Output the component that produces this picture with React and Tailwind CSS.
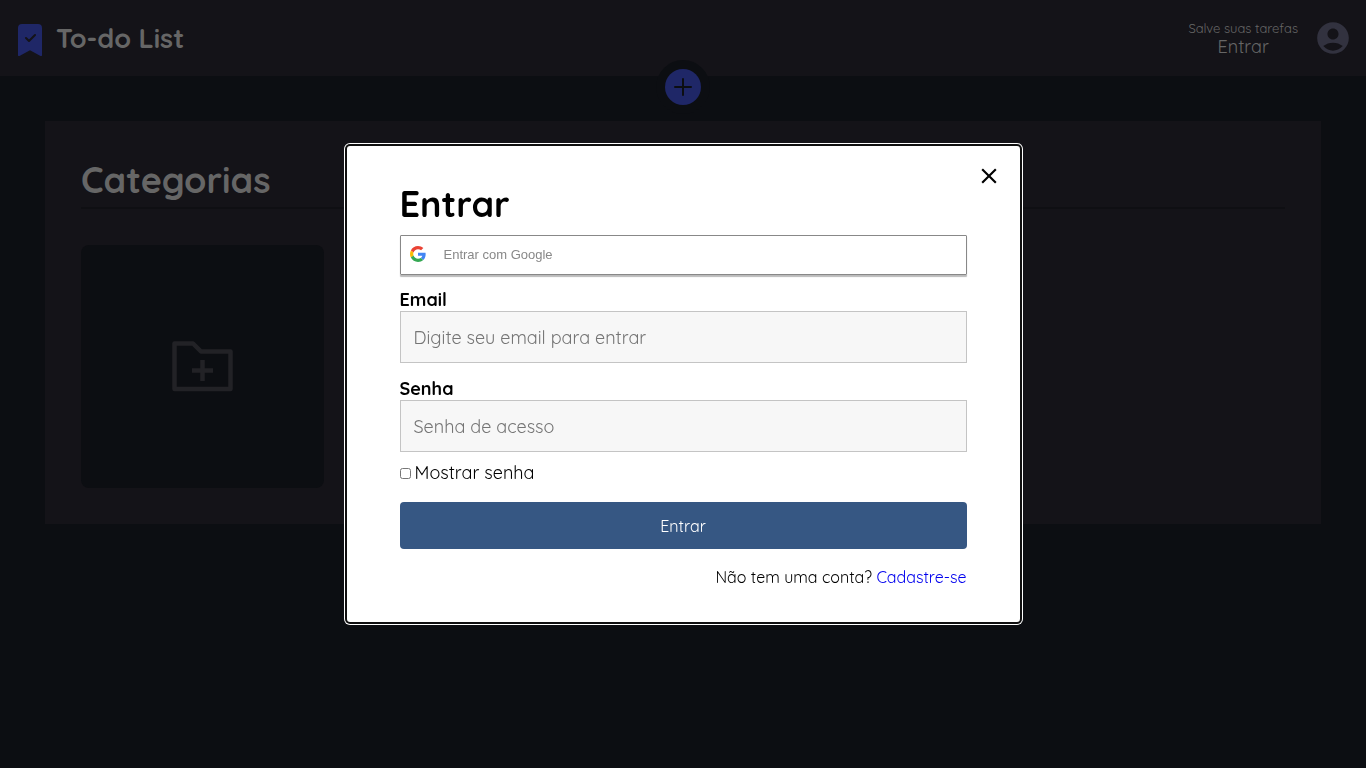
import { useState } from "react";
import { BsFillBookmarkCheckFill } from "react-icons/bs";
import { MdAccountCircle, MdClose } from "react-icons/md";

function GoogleLogo() {
  return (
    <svg viewBox="0 0 48 48" className="size-4" aria-hidden="true">
      <path fill="#EA4335" d="M24 9.5c3.54 0 6.71 1.22 9.21 3.6l6.85-6.85C35.9 2.38 30.47 0 24 0 14.62 0 6.51 5.38 2.56 13.22l7.98 6.19C12.43 13.72 17.74 9.5 24 9.5z" />
      <path fill="#4285F4" d="M46.98 24.55c0-1.57-.15-3.09-.38-4.55H24v9.02h12.94c-.58 2.96-2.26 5.48-4.78 7.18l7.73 6c4.51-4.18 7.09-10.36 7.09-17.65z" />
      <path fill="#FBBC05" d="M10.53 28.59c-.48-1.45-.76-2.99-.76-4.59s.27-3.14.76-4.59l-7.98-6.19C.92 16.46 0 20.12 0 24c0 3.88.92 7.54 2.56 10.78l7.97-6.19z" />
      <path fill="#34A853" d="M24 48c6.48 0 11.93-2.13 15.89-5.81l-7.73-6c-2.15 1.45-4.92 2.3-8.16 2.3-6.26 0-11.57-4.22-13.47-9.91l-7.98 6.19C6.51 42.62 14.62 48 24 48z" />
    </svg>
  );
}

function Header() {
  return (
    <header className="relative flex h-[76px] items-center justify-between bg-[#141318] px-3.5 text-[#666666]">
      <div className="flex items-center gap-2.5">
        <BsFillBookmarkCheckFill className="mt-1 size-8 text-[#1f2767]" />
        <h1 className="text-[27px] leading-9 font-bold">To-do List</h1>
      </div>
      <a href="#entrar" className="flex items-center gap-4">
        <span className="flex flex-col items-center">
          <span className="text-[13px] leading-[18px]">Salve suas tarefas</span>
          <span className="text-lg leading-5">Entrar</span>
        </span>
        <MdAccountCircle className="size-[38px] text-[#32323f]" />
      </a>
      <button
        type="button"
        aria-label="Adicionar tarefa"
        className="absolute top-[60px] left-1/2 flex size-[54px] -translate-x-1/2 items-center justify-center rounded-full bg-[#0c0e12]"
      >
        <span className="flex size-9 items-center justify-center rounded-full bg-[#1f2767]">
          <svg viewBox="0 0 18 18" className="size-[18px] stroke-[#0c0e12]" strokeWidth="2" strokeLinecap="round" aria-hidden="true">
            <path d="M9 1v16M1 9h16" />
          </svg>
        </span>
      </button>
    </header>
  );
}

function Categories() {
  return (
    <main className="mx-[45px] mt-[45px] bg-[#141318] p-9">
      <h2 className="border-b-2 border-[#0f0f13] pb-1 text-4xl leading-[46px] font-bold text-[#666666]">Categorias</h2>
      <button
        type="button"
        aria-label="Nova categoria"
        className="mt-9 flex size-[243px] items-center justify-center rounded-lg bg-[#0c0e12]"
      >
        <svg viewBox="0 0 61 52" className="h-[52px] w-[61px] fill-none stroke-[#222226]" strokeWidth="4.5" strokeLinejoin="round" aria-hidden="true">
          <path d="M2.5 2.5H21l8 8h29.5v37.500h-56z" />
          <path d="M30.5 19v21M20 29.500h21" />
        </svg>
      </button>
    </main>
  );
}

function Field({ id, label, ...props }) {
  return (
    <div className="flex flex-col">
      <label htmlFor={id} className="pt-0.5 text-lg leading-[22px] font-bold">{label}</label>
      <input
        id={id}
        className="h-[52px] w-full border border-[#c4c4c4] bg-[#f7f7f7] px-[13px] text-lg outline-none placeholder:text-[#757575]"
        {...props}
      />
    </div>
  );
}

function LoginDialog() {
  const [visible, setVisible] = useState(false);
  return (
    <div className="fixed inset-0 flex items-center justify-center">
      <section
        role="dialog"
        aria-modal="true"
        aria-labelledby="login-title"
        className="relative w-full max-w-[673px] rounded-[3px] bg-white px-[53px] pt-9 pb-[33px] text-black shadow-[0_0_0_2px_#101010,0_0_0_3px_#ffffff]"
      >
        <button type="button" aria-label="Fechar" className="absolute top-[17px] right-[18px]">
          <MdClose className="size-[26px]" />
        </button>
        <h2 id="login-title" className="text-4xl leading-[43px] font-bold">Entrar</h2>
        <form onSubmit={(e) => e.preventDefault()}>
          <button
            type="button"
            className="mt-2.5 flex h-10 w-full items-center gap-[18px] rounded-[1px] border border-[#888888] px-[9px] pb-0.5 font-['Liberation_Sans',sans-serif] text-[13px] text-[#888888] shadow-[0_2px_1px_#bbbbbb]"
          >
            <GoogleLogo />
            <span className="pt-0.5">Entrar com Google</span>
          </button>
          <div className="mt-3 flex flex-col gap-[13px]">
            <Field id="email" label="Email" type="email" placeholder="Digite seu email para entrar" />
            <Field id="password" label="Senha" type={visible ? "text" : "password"} placeholder="Senha de acesso" />
          </div>
          <label className="mt-[9px] flex items-center gap-1 text-lg leading-6">
            <input type="checkbox" checked={visible} onChange={() => setVisible(!visible)} className="size-[11px]" />
            Mostrar senha
          </label>
          <button type="submit" className="mt-[17px] h-[47px] w-full rounded bg-[#365783] text-base text-white">
            Entrar
          </button>
        </form>
        <p className="mt-4 text-right text-base leading-6">
          Não tem uma conta? <a href="#cadastro" className="text-[#0000ee]">Cadastre-se</a>
        </p>
      </section>
    </div>
  );
}

export default function App() {
  return (
    <div className="min-h-screen bg-[#0c0e12] font-[Quicksand,Lato,sans-serif]">
      <Header />
      <Categories />
      <LoginDialog />
    </div>
  );
}
